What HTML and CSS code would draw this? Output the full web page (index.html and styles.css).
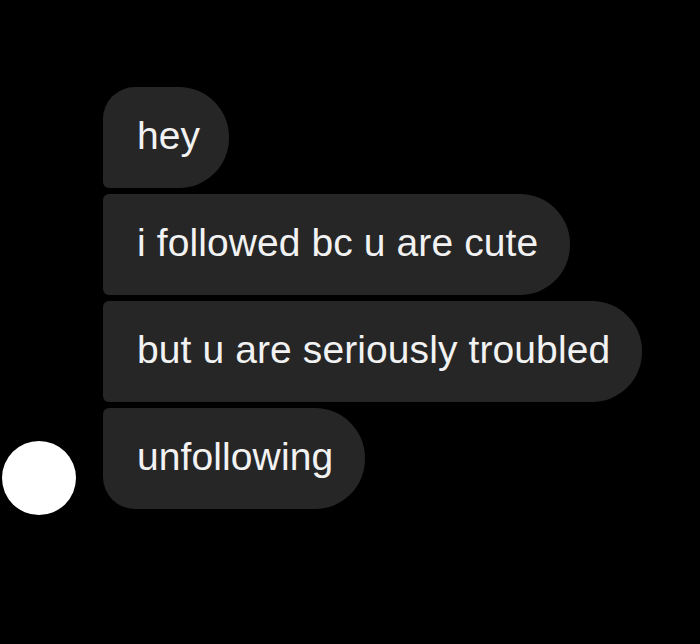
FILE: index.html
```html
<!DOCTYPE html>
<html>
<head>
  <title>Messages</title>
  <meta charset="UTF-8" />
  <link rel="stylesheet" href="styles.css">
</head>
<body>
  <div class="thread">
    <div class="avatar"></div>
    <div class="bubbles">
      <div class="bubble first">hey</div>
      <div class="bubble">i followed bc u are cute</div>
      <div class="bubble">but u are seriously troubled</div>
      <div class="bubble last">unfollowing</div>
    </div>
  </div>
</body>
</html>
```

FILE: styles.css
```css
html, body {
  background: #000;
}
body {
  margin: 0;
  padding: 87px 0 0 2px;
  font-family: "Liberation Sans", Arial, sans-serif;
  color: #f2f2f2;
}
.thread {
  display: flex;
  align-items: flex-end;
  gap: 27px;
}
.avatar {
  width: 74px;
  height: 74px;
  border-radius: 50%;
  background: #fff;
  flex-shrink: 0;
}
.bubbles {
  display: flex;
  flex-direction: column;
  align-items: flex-start;
  gap: 6px;
  margin-bottom: 6px;
}
.bubble {
  height: 101px;
  box-sizing: border-box;
  padding: 0 32px 4px 34px;
  display: flex;
  align-items: center;
  background: #262626;
  font-size: 39px;
  letter-spacing: 0.1px;
  white-space: nowrap;
  border-radius: 6px 50px 50px 6px;
}
.bubble.first {
  padding-right: 29px;
  border-top-left-radius: 32px;
}
.bubble.last {
  border-bottom-left-radius: 32px;
}
```
